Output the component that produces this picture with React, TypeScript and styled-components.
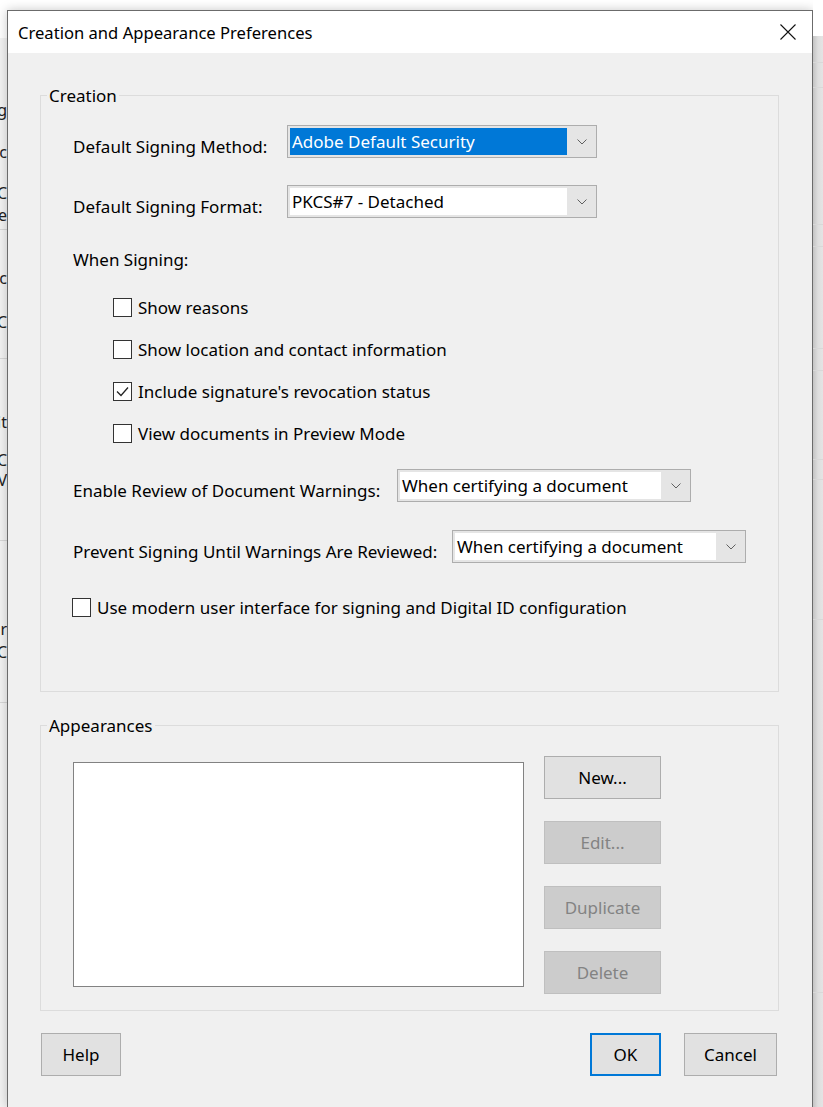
import React from "react";
import styled, { createGlobalStyle } from "styled-components";

const GlobalStyle = createGlobalStyle`
  html, body {
    margin: 0;
    padding: 0;
    background: #ffffff;
  }
  body {
    font-family: "Noto Sans", "Open Sans", sans-serif;
    font-size: 17px;
    color: #000;
  }
`;

const Page = styled.div`
  display: flex;
  width: 823px;
  height: 1107px;
  overflow: hidden;
  background: #ffffff;
`;

/* window peeking out behind the dialog on the left */
const LeftStrip = styled.div`
  width: 7px;
  flex: none;
  overflow: hidden;
  background: linear-gradient(#ffffff 0 38px, #f3f3f3 38px);
  display: flex;
  flex-direction: column;
`;

const BehindText = styled.div<{ $top: number }>`
  margin-top: ${(p) => p.$top}px;
  height: 20px;
  line-height: 20px;
  display: flex;
  justify-content: flex-end;
  white-space: nowrap;
  font-size: 16px;
  color: #222;
`;

const BehindLine = styled.div<{ $top: number }>`
  margin-top: ${(p) => p.$top}px;
  height: 1px;
  background: #d8d8d8;
  flex: none;
`;

const RightStrip = styled.div`
  width: 10px;
  flex: none;
  display: flex;
  flex-direction: column;
  background: linear-gradient(#ffffff 0 36px, transparent 36px),
    linear-gradient(90deg, #c4c4c4, #dedede 5px, #e4e4e4);
`;

const Center = styled.div`
  padding-top: 10px;
  flex: none;
`;

const Dialog = styled.div`
  width: 806px;
  height: 1097px;
  box-sizing: border-box;
  border: 1px solid #6b6b6b;
  border-bottom: none;
  background: #f0f0f0;
  box-shadow: 0 0 10px rgba(0, 0, 0, 0.22);
  display: flex;
  flex-direction: column;
`;

const TitleBar = styled.div`
  height: 42px;
  background: #ffffff;
  display: flex;
  align-items: center;
  justify-content: space-between;
  padding: 0 16px 0 10px;
  flex: none;
`;

const Title = styled.span`
  font-size: 16.6px;
  color: #000;
`;

const Body = styled.div`
  padding: 42px 33px 0 32px;
  display: flex;
  flex-direction: column;
`;

const Group = styled.div<{ $height: number; $gap?: number }>`
  position: relative;
  height: ${(p) => p.$height}px;
  margin-top: ${(p) => p.$gap ?? 0}px;
  box-sizing: border-box;
  border: 1px solid #dcdcdc;
  padding-left: 32px;
`;

const Legend = styled.span`
  position: absolute;
  top: -12px;
  left: 6px;
  padding: 0 2px;
  background: #f0f0f0;
  line-height: 24px;
`;

const Row = styled.div<{ $gap: number }>`
  display: flex;
  align-items: flex-start;
  margin-top: ${(p) => p.$gap}px;
  height: 33px;
`;

const Label = styled.span<{ $width: number }>`
  width: ${(p) => p.$width}px;
  flex: none;
  margin-top: 10px;
  line-height: 24px;
  white-space: nowrap;
`;

const Heading = styled.div<{ $gap: number }>`
  margin-top: ${(p) => p.$gap}px;
  height: 24px;
  line-height: 24px;
`;

const Combo = styled.div<{ $width: number }>`
  width: ${(p) => p.$width}px;
  height: 33px;
  box-sizing: border-box;
  border: 1px solid #adadad;
  background: #e5e5e5;
  display: flex;
  flex: none;
`;

const ComboField = styled.div<{ $selected?: boolean }>`
  flex: 1;
  margin: 2px 0 2px 2px;
  padding-left: 2px;
  line-height: 28px;
  background: ${(p) => (p.$selected ? "#0078d7" : "#ffffff")};
  color: ${(p) => (p.$selected ? "#ffffff" : "#000000")};
  white-space: nowrap;
`;

const ComboArrow = styled.div`
  width: 29px;
  display: flex;
  align-items: center;
  justify-content: center;
`;

const CheckList = styled.div`
  display: flex;
  flex-direction: column;
  gap: 18px;
  padding-left: 40px;
  margin-top: 23px;
`;

const CheckRow = styled.label<{ $gap?: number; $shift?: number }>`
  display: flex;
  align-items: center;
  height: 24px;
  gap: 6px;
  margin-top: ${(p) => p.$gap ?? 0}px;
  margin-left: ${(p) => p.$shift ?? 0}px;
  white-space: nowrap;
`;

const Box = styled.span`
  width: 19px;
  height: 19px;
  box-sizing: border-box;
  border: 1px solid #333333;
  background: #ffffff;
  display: flex;
  align-items: center;
  justify-content: center;
  flex: none;
`;

const AppearBody = styled.div`
  display: flex;
  align-items: flex-start;
  padding-top: 30px;
`;

const ListBox = styled.div`
  width: 451px;
  height: 225px;
  margin-top: 6px;
  box-sizing: border-box;
  border: 1px solid #828282;
  background: #ffffff;
`;

const ButtonColumn = styled.div`
  display: flex;
  flex-direction: column;
  gap: 22px;
  margin-left: 20px;
`;

const Button = styled.button<{ $width: number; $disabledLook?: boolean; $default?: boolean }>`
  width: ${(p) => p.$width}px;
  height: 43px;
  box-sizing: border-box;
  font-family: inherit;
  font-size: 17px;
  padding: 0;
  border: ${(p) =>
    p.$default ? "2px solid #0078d7" : p.$disabledLook ? "1px solid #bfbfbf" : "1px solid #adadad"};
  background: ${(p) => (p.$disabledLook ? "#cccccc" : "#e1e1e1")};
  color: ${(p) => (p.$disabledLook ? "#838383" : "#000000")};
`;

const Footer = styled.div`
  display: flex;
  align-items: center;
  margin-top: 22px;
  padding: 0 35px 0 33px;
`;

const FooterRight = styled.div`
  margin-left: auto;
  display: flex;
  gap: 23px;
`;

const Chevron = () => (
  <svg width="10" height="6" viewBox="0 0 10 6">
    <polyline points="0.5,0.5 5,5 9.5,0.5" fill="none" stroke="#606060" strokeWidth="1" />
  </svg>
);

const CloseIcon = () => (
  <svg width="16" height="16" viewBox="0 0 16 16">
    <path d="M0.5 0.5 L15.5 15.5 M15.5 0.5 L0.5 15.5" stroke="#111" strokeWidth="1.1" />
  </svg>
);

const CheckMark = () => (
  <svg width="15" height="15" viewBox="0 0 15 15">
    <polyline points="2,7.5 6,11.5 13,3.5" fill="none" stroke="#222" strokeWidth="1.3" />
  </svg>
);

const Select: React.FC<{ value: string; width: number; selected?: boolean }> = ({
  value,
  width,
  selected,
}) => (
  <Combo $width={width}>
    <ComboField $selected={selected}>{value}</ComboField>
    <ComboArrow>
      <Chevron />
    </ComboArrow>
  </Combo>
);

const Check: React.FC<{ label: string; checked?: boolean; gap?: number; shift?: number }> = ({
  label,
  checked,
  gap,
  shift,
}) => (
  <CheckRow $gap={gap} $shift={shift}>
    <Box>{checked && <CheckMark />}</Box>
    <span>{label}</span>
  </CheckRow>
);

const behindTexts = [
  { t: "Signing", top: 100 },
  { t: "Basic", top: 22 },
  { t: "C", top: 21 },
  { t: "Se", top: 2 },
  { t: "c", top: 38 },
  { t: "C", top: 24 },
  { t: "it", top: 53 },
  { t: "C", top: 18 },
  { t: "V", top: 0 },
  { t: "r", top: 78 },
  { t: "C", top: 3 },
];

export default function App() {
  return (
    <Page>
      <GlobalStyle />
      <LeftStrip>
        {behindTexts.slice(0, 4).map((b, i) => (
          <BehindText key={i} $top={b.top}>
            {b.t}
          </BehindText>
        ))}
        <BehindLine $top={4} />
        {behindTexts.slice(4, 6).map((b, i) => (
          <BehindText key={i} $top={b.top}>
            {b.t}
          </BehindText>
        ))}
        <BehindLine $top={26} />
        {behindTexts.slice(6, 9).map((b, i) => (
          <BehindText key={i} $top={b.top}>
            {b.t}
          </BehindText>
        ))}
        <BehindLine $top={50} />
        {behindTexts.slice(9).map((b, i) => (
          <BehindText key={i} $top={b.top}>
            {b.t}
          </BehindText>
        ))}
        <BehindLine $top={40} />
      </LeftStrip>

      <Center>
        <Dialog>
          <TitleBar>
            <Title>Creation and Appearance Preferences</Title>
            <CloseIcon />
          </TitleBar>
          <Body>
            <Group $height={597}>
              <Legend>Creation</Legend>
              <Row $gap={29}>
                <Label $width={214}>Default Signing Method:</Label>
                <Select value="Adobe Default Security" width={310} selected />
              </Row>
              <Row $gap={27}>
                <Label $width={214}>Default Signing Format:</Label>
                <Select value="PKCS#7 - Detached" width={310} />
              </Row>
              <Heading $gap={30}>When Signing:</Heading>
              <CheckList>
                <Check label="Show reasons" />
                <Check label="Show location and contact information" />
                <Check label="Include signature's revocation status" checked />
                <Check label="View documents in Preview Mode" />
              </CheckList>
              <Row $gap={24}>
                <Label $width={324}>Enable Review of Document Warnings:</Label>
                <Select value="When certifying a document" width={294} />
              </Row>
              <Row $gap={28}>
                <Label $width={379}>Prevent Signing Until Warnings Are Reviewed:</Label>
                <Select value="When certifying a document" width={294} />
              </Row>
              <Check
                label="Use modern user interface for signing and Digital ID configuration"
                gap={32}
                shift={-1}
              />
            </Group>

            <Group $height={286} $gap={33}>
              <Legend>Appearances</Legend>
              <AppearBody>
                <ListBox />
                <ButtonColumn>
                  <Button $width={117}>New...</Button>
                  <Button $width={117} $disabledLook>
                    Edit...
                  </Button>
                  <Button $width={117} $disabledLook>
                    Duplicate
                  </Button>
                  <Button $width={117} $disabledLook>
                    Delete
                  </Button>
                </ButtonColumn>
              </AppearBody>
            </Group>
          </Body>
          <Footer>
            <Button $width={80}>Help</Button>
            <FooterRight>
              <Button $width={71} $default>
                OK
              </Button>
              <Button $width={93}>Cancel</Button>
            </FooterRight>
          </Footer>
        </Dialog>
      </Center>

      <RightStrip>
        <BehindLine $top={62} />
        <BehindLine $top={24} />
        <BehindLine $top={136} />
        <BehindLine $top={21} />
        <BehindLine $top={101} />
        <BehindLine $top={21} />
        <BehindLine $top={88} />
        <BehindLine $top={19} />
        <BehindLine $top={139} />
        <BehindLine $top={372} />
      </RightStrip>
    </Page>
  );
}
